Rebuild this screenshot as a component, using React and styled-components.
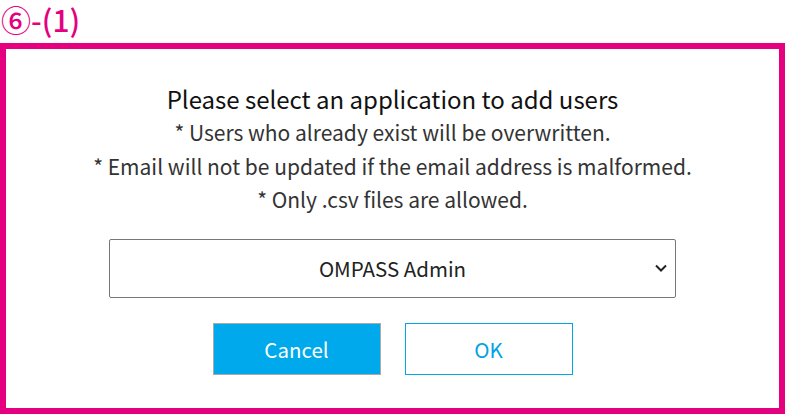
import React from 'react';
import styled, { createGlobalStyle } from 'styled-components';

const GlobalStyle = createGlobalStyle`
  html, body {
    margin: 0;
    padding: 0;
    background: #fff;
  }
  body {
    font-family: "Noto Sans CJK KR", "Noto Sans", sans-serif;
  }
`;

const Page = styled.div`
  width: 785px;
  height: 414px;
  display: flex;
  flex-direction: column;
  box-sizing: border-box;
`;

const StepLabel = styled.div`
  padding: 0 0 5px 1px;
  color: #e4007f;
  font-size: 30px;
  font-weight: 500;
  line-height: 38px;
  white-space: nowrap;
`;

const Frame = styled.div`
  flex: 1;
  border: 6px solid #e4007f;
  display: flex;
  flex-direction: column;
  align-items: center;
  padding-top: 33px;
  box-sizing: border-box;
`;

const Title = styled.div`
  font-size: 24px;
  font-weight: 400;
  color: #111;
  line-height: 34px;
`;

const Note = styled.div`
  font-size: 21px;
  font-weight: 400;
  color: #333;
  line-height: 33.5px;
`;

const SelectWrap = styled.div`
  position: relative;
  margin-top: 22px;
  width: 567px;
  height: 59px;
`;

const Select = styled.select`
  appearance: none;
  width: 100%;
  height: 100%;
  border: 1px solid #777;
  border-radius: 2px;
  background: #fff;
  font-family: inherit;
  font-size: 20.5px;
  font-weight: 400;
  color: #222;
  text-align: center;
  text-align-last: center;
  outline: none;
`;

const Chevron = styled.svg`
  position: absolute;
  right: 8px;
  top: 24px;
  pointer-events: none;
`;

const Buttons = styled.div`
  display: flex;
  gap: 24px;
  margin-top: 25px;
`;

const Button = styled.button`
  width: 168px;
  height: 52px;
  box-sizing: border-box;
  font-family: inherit;
  font-size: 20.5px;
  font-weight: 400;
  border: 1px solid ${({ primary }) => (primary ? '#aaa' : '#00a8e8')};
  background: ${({ primary }) => (primary ? '#00a9eb' : '#fff')};
  color: ${({ primary }) => (primary ? '#fff' : '#00a3e3')};
  cursor: pointer;
`;

export default function App() {
  return (
    <Page>
      <GlobalStyle />
      <StepLabel>⑥-(1)</StepLabel>
      <Frame>
        <Title>Please select an application to add users</Title>
        <Note>* Users who already exist will be overwritten.</Note>
        <Note>* Email will not be updated if the email address is malformed.</Note>
        <Note>* Only .csv files are allowed.</Note>
        <SelectWrap>
          <Select defaultValue="admin">
            <option value="admin">OMPASS Admin</option>
          </Select>
          <Chevron width="14" height="10" viewBox="0 0 14 10">
            <path d="M2 2.5 L7 7.5 L12 2.5" fill="none" stroke="#222" strokeWidth="2" />
          </Chevron>
        </SelectWrap>
        <Buttons>
          <Button primary>Cancel</Button>
          <Button>OK</Button>
        </Buttons>
      </Frame>
    </Page>
  );
}
